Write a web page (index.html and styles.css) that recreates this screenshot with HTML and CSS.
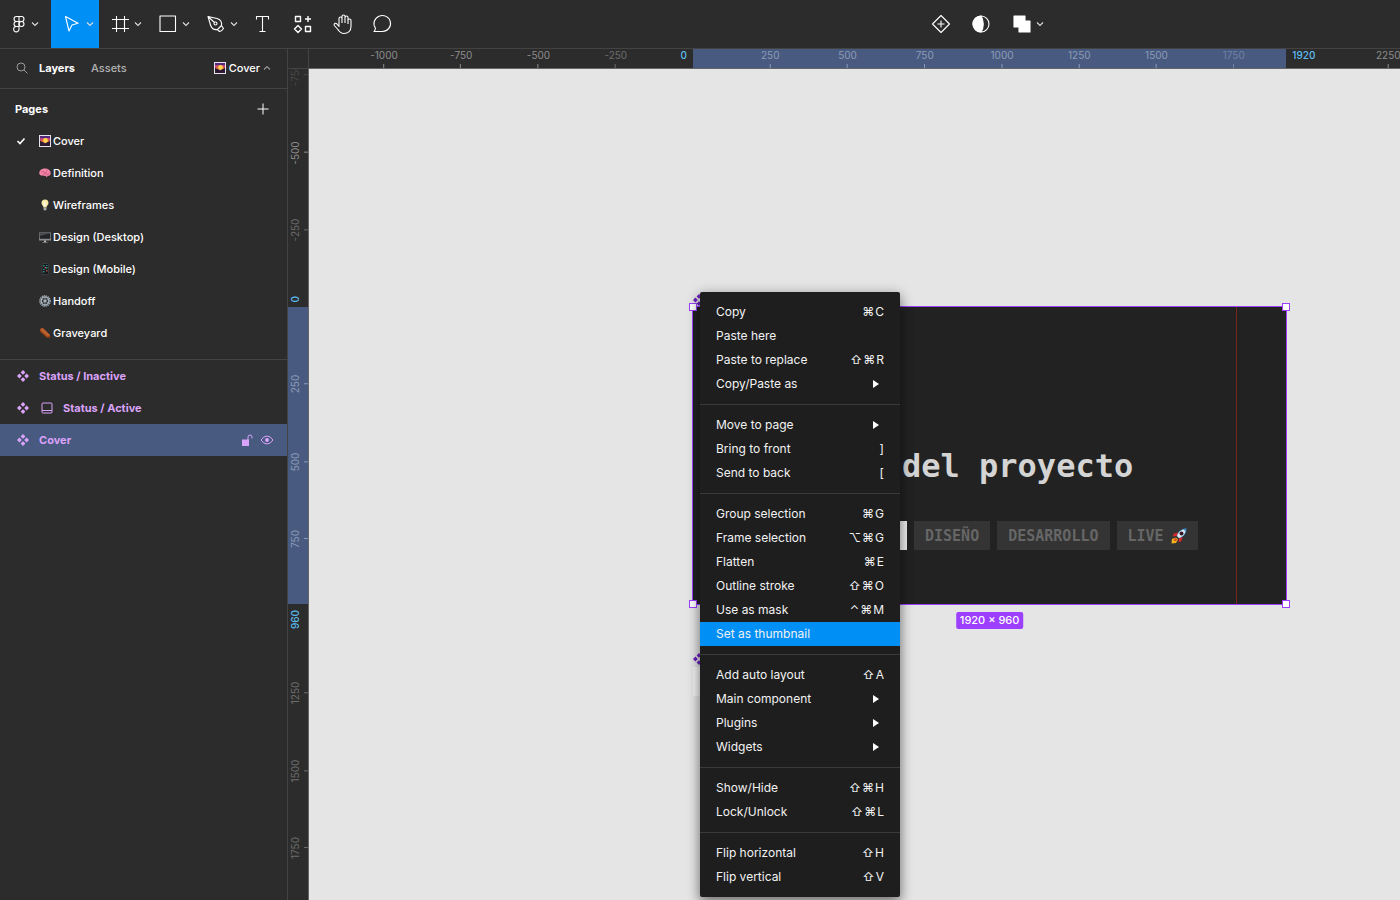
FILE: index.html
```html
<!DOCTYPE html>
<html lang="en">
<head>
<meta charset="utf-8">
<title>Cover</title>
<link rel="stylesheet" href="styles.css">
</head>
<body>
<svg class="sprite" aria-hidden="true">
  <symbol id="chevron" viewBox="0 0 8 8"><path d="M1 2.500 4 5.500 7 2.500"/></symbol>
  <symbol id="component" viewBox="0 0 12 12"><path d="M6 0 8.400 2.400 6 4.800 3.600 2.400ZM6 7.200 8.400 9.600 6 12 3.600 9.600ZM2.400 3.600 4.800 6 2.400 8.400 0 6ZM9.600 3.600 12 6 9.600 8.400 7.200 6Z"/></symbol>
  <symbol id="arrow" viewBox="0 0 6 8"><path d="M0 0 6 4 0 8Z"/></symbol>
  <symbol id="sunrise" viewBox="0 0 12 12">
    <path fill="#e8e2ee" d="M0 0h12v12H0z"/>
    <path fill="#57297c" d="M1 1h10v10H1z"/>
    <path fill="#b8467c" d="M1 3h10v3H1z"/>
    <path fill="#e0663c" d="M2 4.500h8v3H2z"/>
    <circle cx="6.500" cy="5.500" r="2.400" fill="#ffd54a"/>
    <path fill="#2b1a30" d="M1 6l2.500 1L6 9l2-1.500L11 6v5H1z"/>
  </symbol>
</svg>

<header class="toolbar">
  <div class="tools">
    <button class="tool tool-menu" aria-label="Main menu">
      <svg class="icon" viewBox="0 0 24 24"><path d="M12 4.500H9.500a2.500 2.500 0 0 0 0 5H12zM12 4.500h2.500a2.500 2.500 0 0 1 0 5H12zM12 9.500H9.500a2.500 2.500 0 0 0 0 5H12zM12 14.500H9.500a2.700 2.700 0 1 0 2.500 2.700z"/><circle cx="14.500" cy="12" r="2.500"/></svg>
      <svg class="chevron"><use href="#chevron"/></svg>
    </button>
    <button class="tool tool-split active" aria-label="Move">
      <svg class="icon" viewBox="0 0 24 24"><path d="M5.500 4.500 18 11.200 12 13 9 19Z"/></svg>
      <svg class="chevron"><use href="#chevron"/></svg>
    </button>
    <button class="tool tool-split" aria-label="Frame">
      <svg class="icon" viewBox="0 0 24 24"><path d="M8.500 4v16M16.500 4v16M4 7.500h17M4 16.500h17"/></svg>
      <svg class="chevron"><use href="#chevron"/></svg>
    </button>
    <button class="tool tool-split" aria-label="Rectangle">
      <svg class="icon" viewBox="0 0 24 24"><path d="M4 4h15.500v15.500H4z"/></svg>
      <svg class="chevron"><use href="#chevron"/></svg>
    </button>
    <button class="tool tool-split" aria-label="Pen">
      <svg class="icon" viewBox="0 0 24 24"><path d="M4 4.500 13 6.500C16.500 7.500 18 10 17.500 13.500L13.500 17.500C10 18 7.500 16.500 6.500 13ZM4 4.500 10.500 10.500M13.500 17.500 15.500 19.500Q17 20 19.500 16.500L17.500 13.500"/><circle cx="11.500" cy="11.500" r="1.500"/></svg>
      <svg class="chevron"><use href="#chevron"/></svg>
    </button>
    <button class="tool" aria-label="Text">
      <svg class="icon" viewBox="0 0 24 24"><path d="M5.500 7.500v-3h12v3M11.500 4.500v15M8.500 19.500h6"/></svg>
    </button>
    <button class="tool" aria-label="Resources">
      <svg class="icon heavy" viewBox="0 0 24 24"><path d="M4.500 4.500h5v5h-5zM14.500 14.500h5v5h-5zM17 4v6M14 7h6M7 13.500l3.500 3.500L7 20.500 3.500 17z"/></svg>
    </button>
    <button class="tool" aria-label="Hand">
      <svg class="icon" viewBox="0 0 24 24"><path d="M8 13V6.500a1.500 1.500 0 0 1 3 0V11M11 11V4.500a1.500 1.500 0 0 1 3 0V11M14 11V5.500a1.500 1.500 0 0 1 3 0V12M17 12V8.500a1.500 1.500 0 0 1 3 0V14.500C20 19 17 21.500 13 21.500C9.500 21.500 8 19.500 6.500 17L3.300 13.500C2.500 11.500 4.500 10.500 6 12L8 14.500V12"/></svg>
    </button>
    <button class="tool" aria-label="Comment">
      <svg class="icon" viewBox="0 0 24 24"><path d="M3 19.500Q4.500 18.500 4.400 16A8.300 8 0 1 1 11.500 19.500Z"/></svg>
    </button>
  </div>
  <div class="tools tools-object">
    <button class="tool" aria-label="Create component">
      <svg class="icon" viewBox="0 0 24 24"><path d="M12 3.500 20.500 12 12 20.500 3.500 12ZM12 8.500v7M8.500 12h7"/></svg>
    </button>
    <button class="tool" aria-label="Mask">
      <svg class="icon" viewBox="0 0 24 24"><circle cx="12" cy="12" r="8"/><path class="solid" d="M12 4a8 8 0 0 0 0 16C15 16 15 8 12 4Z"/></svg>
    </button>
    <button class="tool tool-split" aria-label="Union selection">
      <svg class="icon" viewBox="0 0 24 24"><path class="solid" d="M4 4h11v5h5v11H9v-5H4Z"/></svg>
      <svg class="chevron"><use href="#chevron"/></svg>
    </button>
  </div>
</header>

<div class="workspace">
  <aside class="sidebar">
    <nav class="tabs">
      <svg class="search" viewBox="0 0 12 12"><circle cx="5" cy="5" r="4"/><path d="M8 8l3.500 3.500"/></svg>
      <button class="tab selected">Layers</button>
      <button class="tab">Assets</button>
      <button class="page-switch">
        <svg class="emoji"><use href="#sunrise"/></svg>
        <span>Cover</span>
        <svg class="chevron up"><use href="#chevron"/></svg>
      </button>
    </nav>

    <section class="pages">
      <div class="pages-head">
        <h2>Pages</h2>
        <button class="add" aria-label="Add page"><svg viewBox="0 0 12 12"><path d="M6 .5v11M.5 6h11"/></svg></button>
      </div>
      <ul>
        <li><svg class="check" viewBox="0 0 10 8"><path d="M1.500 4 4 6.500 8.500 1.500"/></svg><svg class="emoji"><use href="#sunrise"/></svg><span>Cover</span></li>
        <li><svg class="emoji" viewBox="0 0 12 12"><path fill="#f286a8" d="M.3 6.500C0 3.500 3 1.600 6 1.600S11.800 3.500 11.700 6.500C11.600 8.500 10 9 8.500 8.800L8 10.500 6.600 9 3 8.600C1.500 8.600.5 8 .3 6.500Z"/><path fill="none" stroke="#c4486f" stroke-width=".7" d="M2 5.500Q3.500 3.500 5 5T8 4.500M4 7.500Q6 6 7.500 7T10.500 6M7 2.500 8.500 3.500"/></svg><span>Definition</span></li>
        <li><svg class="emoji" viewBox="0 0 12 12"><path fill="#fbe9a8" d="M6 .5A3.500 3.500 0 0 1 9.500 4C9.500 5.800 7.700 6.500 7.500 8.500H4.500C4.300 6.500 2.500 5.800 2.500 4A3.500 3.500 0 0 1 6 .5Z"/><path fill="#fffbe2" d="M4.500 3h2v4h-2z"/><path fill="#a9a9a9" d="M4.500 8.500h3v2L6.500 11.500h-1L4.500 10.500Z"/></svg><span>Wireframes</span></li>
        <li><svg class="emoji" viewBox="0 0 12 12"><path fill="#8b8d90" d="M0 1.500h12v8H0z"/><path fill="#222427" d="M.7 2.200h10.600v5.600H.7z"/><path fill="#4c4f54" d="M.7 2.200h10.600L.7 5z"/><path fill="#b5b7ba" d="M5 9.500h2v1.500h1.500v.6h-5V11H5z"/></svg><span>Design (Desktop)</span></li>
        <li><svg class="emoji" viewBox="0 0 12 12"><rect x="3" y=".5" width="6.500" height="11" rx="1" fill="#17191c" stroke="#4b5054" stroke-width=".6"/><path fill="#2c9c79" d="M4 2h1.500v1.500H4zM7 4h1.500v1.500H7zM4 8h1.500v1.500H4z"/><path fill="#b6504e" d="M5.500 4H7v1.500H5.500zM7 7h1.500v1.500H7z"/><path fill="#357fa8" d="M7 2h1.500v1H7zM4 6h1.500v1H4z"/></svg><span>Design (Mobile)</span></li>
        <li><svg class="emoji" viewBox="0 0 12 12"><circle cx="6" cy="6" r="5.200" fill="none" stroke="#97a6b0" stroke-width="1.400" stroke-dasharray="1.300 .75"/><circle cx="6" cy="6" r="3.900" fill="none" stroke="#a4b1ba" stroke-width="1.500"/><circle cx="6" cy="6" r="1.400" fill="#a4b1ba"/><path stroke="#a4b1ba" stroke-width=".7" d="M6 2v8M2.500 4l7 4M2.500 8l7-4"/></svg><span>Handoff</span></li>
        <li><svg class="emoji" viewBox="0 0 12 12"><path fill="#7c3714" d="M.8 1.800 3.800.8 10.800 7.500 11.600 10 10 11.200 7.500 10.700 1 5Z"/><path fill="#b8602f" d="M1.300 1.900 3.800 1 10.500 7.600 10.700 9.200 8.300 9.800 1.500 3.800Z"/></svg><span>Graveyard</span></li>
      </ul>
    </section>

    <ul class="layers">
      <li><svg class="glyph"><use href="#component"/></svg><span>Status / Inactive</span></li>
      <li><svg class="glyph"><use href="#component"/></svg><svg class="layout" viewBox="0 0 12 12"><rect x="1" y="1" width="10" height="10" rx="1"/><path d="M1 8.500h10"/></svg><span>Status / Active</span></li>
      <li class="selected"><svg class="glyph"><use href="#component"/></svg><span>Cover</span>
        <div class="actions">
          <button aria-label="Lock"><svg viewBox="0 0 12 12"><path class="fill" d="M1 5.500h7V12H1z"/><path d="M7 6V3a2 2 0 0 1 4 0v1.500"/></svg></button>
          <button aria-label="Hide"><svg class="eye" viewBox="0 0 14 12"><path d="M1 6Q3.500 2 7 2T13 6Q10.500 10 7 10T1 6Z"/><circle class="fill" cx="7" cy="6" r="2"/></svg></button>
        </div>
      </li>
    </ul>
  </aside>

  <main class="stage">
    <div class="corner"></div>
    <div class="ruler ruler-x">
      <div class="span"></div>
      <span class="tick" style="--v:-1000">-1000</span>
      <span class="tick" style="--v:-750">-750</span>
      <span class="tick" style="--v:-500">-500</span>
      <span class="tick dim" style="--v:-250">-250</span>
      <span class="edge start">0</span>
      <span class="tick over" style="--v:250">250</span>
      <span class="tick over" style="--v:500">500</span>
      <span class="tick over" style="--v:750">750</span>
      <span class="tick over" style="--v:1000">1000</span>
      <span class="tick over" style="--v:1250">1250</span>
      <span class="tick over" style="--v:1500">1500</span>
      <span class="tick over dim" style="--v:1750">1750</span>
      <span class="edge end">1920</span>
      <span class="tick" style="--v:2250">2250</span>
    </div>
    <div class="ruler ruler-y">
      <div class="span"></div>
      <span class="tick faint" style="--v:-750">-750</span>
      <span class="tick" style="--v:-500">-500</span>
      <span class="tick dim" style="--v:-250">-250</span>
      <span class="edge start">0</span>
      <span class="tick over" style="--v:250">250</span>
      <span class="tick over" style="--v:500">500</span>
      <span class="tick over" style="--v:750">750</span>
      <span class="edge end">960</span>
      <span class="tick dim" style="--v:1250">1250</span>
      <span class="tick dim" style="--v:1500">1500</span>
      <span class="tick dim" style="--v:1750">1750</span>
    </div>

    <div class="canvas">
      <svg class="mark mark-cover"><use href="#component"/></svg>
      <article class="cover">
        <h1>del proyecto</h1>
        <div class="tags">
          <span class="tag current"></span>
          <span class="tag">DISEÑO</span>
          <span class="tag">DESARROLLO</span>
          <span class="tag">LIVE <svg class="rocket" viewBox="0 0 16 16"><path fill="#3c8fd0" d="M15.500.5C11 .5 7.500 3 5.500 7.500L8.500 10.500C13 8.500 15.500 5 15.500.5Z"/><path fill="#dfe7ee" d="M12.500 1.500C9 2.500 7 5 6 8L8 10C11 9 13.500 7 14.500 3.500Z"/><path fill="#d8262c" d="M7 4.500 3 5.500 1.500 8.500 5.500 8ZM11.500 9 10.500 13 7.500 14.500 8 10.500Z"/><circle cx="10.500" cy="5.500" r="2" fill="#3a1820"/><path fill="#f2b71f" d="M5 9.500 1 11 .5 15.500 5 15 7 11.500Z"/><path fill="#e24a1c" d="M4.500 10 2.500 12 4 13.500 6.500 11.500Z"/></svg></span>
        </div>
        <i class="guide"></i>
        <i class="handle nw"></i><i class="handle ne"></i><i class="handle sw"></i><i class="handle se"></i>
        <span class="size">1920 × 960</span>
      </article>
      <svg class="mark mark-status"><use href="#component"/></svg>
      <div class="status"></div>

      <div class="menu" role="menu">
        <button role="menuitem">Copy<span class="keys"><kbd>⌘</kbd><kbd>C</kbd></span></button>
        <button role="menuitem">Paste here</button>
        <button role="menuitem">Paste to replace<span class="keys"><kbd>⇧</kbd><kbd>⌘</kbd><kbd>R</kbd></span></button>
        <button role="menuitem">Copy/Paste as<svg class="more"><use href="#arrow"/></svg></button>
        <hr>
        <button role="menuitem">Move to page<svg class="more"><use href="#arrow"/></svg></button>
        <button role="menuitem">Bring to front<span class="keys"><kbd>]</kbd></span></button>
        <button role="menuitem">Send to back<span class="keys"><kbd>[</kbd></span></button>
        <hr>
        <button role="menuitem">Group selection<span class="keys"><kbd>⌘</kbd><kbd>G</kbd></span></button>
        <button role="menuitem">Frame selection<span class="keys"><kbd>⌥</kbd><kbd>⌘</kbd><kbd>G</kbd></span></button>
        <button role="menuitem">Flatten<span class="keys"><kbd>⌘</kbd><kbd>E</kbd></span></button>
        <button role="menuitem">Outline stroke<span class="keys"><kbd>⇧</kbd><kbd>⌘</kbd><kbd>O</kbd></span></button>
        <button role="menuitem">Use as mask<span class="keys"><kbd>⌃</kbd><kbd>⌘</kbd><kbd>M</kbd></span></button>
        <button role="menuitem" class="hover">Set as thumbnail</button>
        <hr>
        <button role="menuitem">Add auto layout<span class="keys"><kbd>⇧</kbd><kbd>A</kbd></span></button>
        <button role="menuitem">Main component<svg class="more"><use href="#arrow"/></svg></button>
        <button role="menuitem">Plugins<svg class="more"><use href="#arrow"/></svg></button>
        <button role="menuitem">Widgets<svg class="more"><use href="#arrow"/></svg></button>
        <hr>
        <button role="menuitem">Show/Hide<span class="keys"><kbd>⇧</kbd><kbd>⌘</kbd><kbd>H</kbd></span></button>
        <button role="menuitem">Lock/Unlock<span class="keys"><kbd>⇧</kbd><kbd>⌘</kbd><kbd>L</kbd></span></button>
        <hr>
        <button role="menuitem">Flip horizontal<span class="keys"><kbd>⇧</kbd><kbd>H</kbd></span></button>
        <button role="menuitem">Flip vertical<span class="keys"><kbd>⇧</kbd><kbd>V</kbd></span></button>
      </div>
    </div>
  </main>
</div>
</body>
</html>
```
FILE: styles.css
```css
:root {
  --panel: #2c2c2c;
  --line: #434343;
  --select: #485a7f;
  --blue: #008ff5;
  --purple: #9c3fff;
  --lilac: #daa3fa;
  --scale: 0.309px;
  --x0: 384px;
  --y0: 238px;
}

* { box-sizing: border-box; }

body {
  margin: 0;
  height: 100vh;
  display: flex;
  flex-direction: column;
  overflow: hidden;
  background: var(--panel);
  color: #fff;
  font: 11px/16px Inter, "Liberation Sans", sans-serif;
}

button {
  border: 0;
  padding: 0;
  background: none;
  color: inherit;
  font: inherit;
}

ul { list-style: none; margin: 0; padding: 0; }

.sprite { display: none; }

/* Toolbar */
.toolbar {
  display: flex;
  flex: none;
  justify-content: space-between;
  border-bottom: 1px solid var(--line);
}
.tools { display: flex; height: 48px; }
.tools-object { margin-right: 351px; }
.tool {
  display: flex;
  align-items: center;
  justify-content: center;
  width: 40px;
}
.tool-menu { width: 51px; justify-content: flex-start; padding-left: 7px; }
.tool-split {
  width: 48px;
  justify-content: flex-start;
  gap: 2px;
  padding-left: 9px;
}
.tool.active { background: var(--blue); }
.icon {
  width: 24px;
  height: 24px;
  fill: none;
  stroke: #fff;
  stroke-width: 1.1;
  stroke-linejoin: round;
}
.icon.heavy { stroke-width: 1.4; }
.icon .solid { fill: #fff; }
.chevron { width: 8px; height: 8px; fill: none; stroke: #ddd; stroke-width: 1.1; }
.chevron.up { transform: rotate(180deg); stroke: #999; }

/* Sidebar */
.workspace { display: flex; flex: 1; min-height: 0; }
.sidebar { width: 288px; flex: none; border-right: 1px solid var(--line); }
.tabs {
  display: flex;
  align-items: center;
  height: 40px;
  padding: 0 16px 2px;
  border-bottom: 1px solid var(--line);
}
.search { width: 12px; height: 12px; margin-right: 11px; fill: none; stroke: #999; }
.tab { margin-right: 16px; color: #b3b3b3; font-weight: 500; }
.tab.selected { color: #fff; font-weight: 700; }
.page-switch {
  display: flex;
  align-items: center;
  gap: 3px;
  margin-left: auto;
  font-weight: 500;
}
.emoji { width: 12px; height: 12px; flex: none; }
.pages { padding: 4px 0 10px; border-bottom: 1px solid var(--line); }
.pages-head {
  display: flex;
  align-items: center;
  justify-content: space-between;
  height: 32px;
  padding: 0 18px 0 15px;
}
.pages h2 { margin: 0; font-size: 11px; font-weight: 700; }
.add { display: flex; }
.add svg { width: 12px; height: 12px; stroke: #fff; }
.pages li {
  position: relative;
  display: flex;
  align-items: center;
  gap: 2px;
  height: 32px;
  padding-left: 39px;
  font-weight: 500;
}
.check {
  position: absolute;
  left: 16px;
  width: 10px;
  height: 8px;
  fill: none;
  stroke: #fff;
  stroke-width: 1.6;
}
.layers li {
  display: flex;
  align-items: center;
  gap: 10px;
  height: 32px;
  padding: 0 13px 0 17px;
  color: var(--lilac);
  font-weight: 700;
}
.layers li.selected { background: var(--select); }
.layers span { margin-right: auto; }
.actions { display: flex; gap: 7px; }
.layers button { display: flex; }
.layers svg { width: 12px; height: 12px; fill: none; stroke: var(--lilac); }
.layers .eye { width: 14px; }
.layers .fill, .layers .glyph { fill: var(--lilac); stroke: none; }
.layers .layout { margin: 0 0 0 2px; }

/* Rulers */
.stage {
  flex: 1;
  min-width: 0;
  display: grid;
  grid-template: 20px 1fr / 21px 1fr;
}
.corner { border-right: 1px solid var(--line); border-bottom: 1px solid var(--line); }
.ruler {
  position: relative;
  overflow: hidden;
  color: #8c8c8c;
  font-size: 10px;
  line-height: 12px;
}
.ruler-x { border-bottom: 1px solid #666; }
.ruler-y { border-right: 1px solid #666; }
.ruler .span { position: absolute; background: var(--select); }
.ruler-x .span { left: var(--x0); width: calc(1920 * var(--scale)); top: 0; bottom: 0; }
.ruler-y .span { top: var(--y0); height: calc(960 * var(--scale)); left: 0; right: 0; }
.tick, .edge { position: absolute; }
.tick::after { content: ""; position: absolute; background: currentColor; }
.ruler-x .tick {
  left: calc(var(--x0) + var(--v) * var(--scale));
  top: 0;
  height: 19px;
  transform: translateX(-50%);
}
.ruler-x .tick::after { left: 50%; bottom: 0; width: 1px; height: 4px; margin-left: -1px; }
.ruler-y .tick, .ruler-y .edge { writing-mode: vertical-rl; left: 0; padding-right: 1px; }
.ruler-y .tick {
  top: calc(var(--y0) + var(--v) * var(--scale));
  width: 20px;
  transform: translateY(-50%) rotate(180deg);
}
.ruler-y .tick::after { top: 50%; left: 0; height: 1px; width: 4px; }
.ruler .dim { color: #6c6c6c; }
.ruler .faint { color: #484848; }
.ruler .over { color: #8c9bb8; }
.ruler .over.dim { color: #7182a5; }
.edge { color: #5cbcf0; font-weight: 500; }
.ruler-x .start { right: calc(100% - var(--x0) + 6px); }
.ruler-x .end { left: calc(var(--x0) + 1920 * var(--scale) + 6px); }
.ruler-y .edge { transform: rotate(180deg); }
.ruler-y .start { bottom: calc(100% - var(--y0) + 5px); }
.ruler-y .end { top: calc(var(--y0) + 960 * var(--scale) + 6px); }

/* Canvas */
.canvas { position: relative; overflow: hidden; background: #e5e5e5; }
.cover {
  position: absolute;
  left: var(--x0);
  top: var(--y0);
  width: calc(1920 * var(--scale));
  height: calc(960 * var(--scale));
  padding: 139px 0 0 209px;
  background: #222;
  box-shadow: 0 0 0 1px var(--purple);
}
.cover h1 {
  margin: 0;
  color: #d4d4d4;
  font: 700 32px/40px "DejaVu Sans Mono", monospace;
  white-space: nowrap;
}
.tags { display: flex; gap: 7px; margin: 35px 0 0 -104px; }
.tag {
  display: flex;
  align-items: center;
  gap: 7px;
  height: 29px;
  padding: 0 11px;
  background: #343434;
  color: #666;
  font: 700 15px/20px "DejaVu Sans Mono", monospace;
}
.tag.current { width: 109px; background: #eee; }
.rocket { width: 16px; height: 16px; }
.guide { position: absolute; top: 0; bottom: 0; right: 49px; width: 1px; background: #74261a; }
.handle {
  position: absolute;
  width: 8px;
  height: 8px;
  background: #fff;
  border: 1px solid var(--purple);
}
.nw, .ne { top: -4px; }
.sw, .se { bottom: -4px; }
.nw, .sw { left: -4px; }
.ne, .se { right: -4px; }
.size {
  position: absolute;
  top: 100%;
  left: 50%;
  transform: translateX(-50%);
  margin-top: 8px;
  padding: 0 4px;
  border-radius: 2px;
  background: var(--purple);
  font-size: 11px;
  font-weight: 500;
  line-height: 17px;
  white-space: nowrap;
}
.mark { position: absolute; left: var(--x0); width: 12px; height: 12px; fill: #6b1fc4; }
.mark-cover { top: 225px; }
.mark-status { top: 584px; }
.status {
  position: absolute;
  left: var(--x0);
  top: 598px;
  width: 75px;
  height: 29px;
  background: #f3f3f3;
}

/* Context menu */
.menu {
  position: absolute;
  left: 391px;
  top: 223px;
  width: 200px;
  padding: 8px 0;
  border-radius: 2px;
  background: #1e1e1e;
  box-shadow: 0 2px 14px rgba(0, 0, 0, 0.25), 0 6px 12px rgba(0, 0, 0, 0.35);
}
.menu button {
  display: flex;
  align-items: center;
  justify-content: space-between;
  width: 100%;
  height: 24px;
  padding: 0 16px;
  font-size: 12px;
  line-height: 16px;
  color: #f2f2f2;
}
.menu button.hover { background: var(--blue); }
.menu hr { margin: 8px 0; border: 0; border-top: 1px solid #3a3a3a; }
.keys { display: flex; gap: 1px; }
.keys kbd { font: inherit; }
.more { width: 6px; height: 8px; margin-right: 5px; fill: #fff; }
```
